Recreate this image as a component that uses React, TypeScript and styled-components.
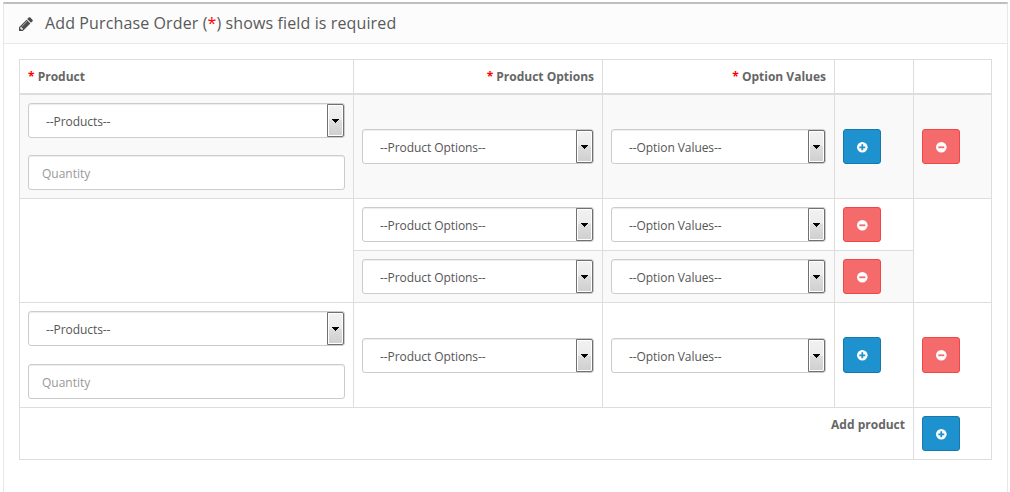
import React from "react";
import styled, { createGlobalStyle } from "styled-components";

const GlobalStyle = createGlobalStyle`
  * { box-sizing: border-box; }
  body {
    margin: 0;
    background: #fff;
    color: #666;
    font: 12px/20px "Open Sans", "Noto Sans", sans-serif;
    overflow: hidden;
  }
`;

const Panel = styled.section`
  width: 1005px;
  height: 490px;
  margin: 2px 0 0 3px;
  border: 1px solid #e8e8e8;
  border-top: 2px solid #bfbfbf;
  border-bottom: 0;
`;

const PanelHeading = styled.header`
  display: flex;
  align-items: center;
  height: 40px;
  padding-left: 15px;
  background: #fcfcfc;
  border-bottom: 1px solid #e8e8e8;
`;

const PanelTitle = styled.h3`
  margin: 0 0 2px 12px;
  color: #595959;
  font-size: 16px;
  font-weight: 400;
  line-height: 20px;
  letter-spacing: 0.12px;
  white-space: nowrap;
`;

const PanelBody = styled.div`
  padding: 15px;
`;

const Table = styled.div`
  display: grid;
  width: 973px;
  grid-template-columns: 333px 248px 231px 78px 77px;
  grid-template-rows: 34px 103px 51px 51px 104px 51px;
  gap: 1px;
  background: #ddd;
  border: 1px solid #ddd;
`;

const HeadCell = styled.div<{ $align?: string }>`
  padding: 7px 8px 0;
  background: #fff;
  border-bottom: 1px solid #ddd;
  font-weight: 700;
  text-align: ${(p) => p.$align ?? "right"};
  white-space: nowrap;
`;

const Cell = styled.div<{ $striped?: boolean; $rows?: number; $nudge?: boolean }>`
  display: flex;
  align-items: center;
  padding: ${(p) => (p.$nudge ? "1px" : "0")} 8px 0;
  background: ${(p) => (p.$striped ? "#f9f9f9" : "#fff")};
  grid-row: span ${(p) => p.$rows ?? 1};
`;

const ProductCell = styled(Cell)`
  flex-direction: column;
  justify-content: space-between;
  padding: 8px;
`;

const FooterCell = styled.div`
  grid-column: span 4;
  padding: 7px 8px;
  background: #fff;
  font-weight: 700;
  text-align: right;
`;

const Required = styled.span`
  color: #f00;
`;

const SelectBox = styled.div`
  display: flex;
  justify-content: space-between;
  width: 100%;
  height: 35px;
  padding-left: 17px;
  background: #fff;
  border: 1px solid #ccc;
  border-radius: 3px;
  box-shadow: inset 0 1px 1px rgba(0, 0, 0, 0.075);
  color: #555;
  line-height: 35px;
  letter-spacing: -0.07px;
`;

const SelectArrow = styled.span`
  display: flex;
  align-items: center;
  justify-content: center;
  width: 17px;
  height: 33px;
  border: 1px solid #707070;
  border-radius: 0 2px 2px 0;
  box-shadow: inset 0 0 0 1px #fff;
  background: linear-gradient(#f2f2f2, #ebebeb 50%, #dddddd 50%, #cfcfcf);
`;

const QuantityInput = styled.input`
  width: 100%;
  height: 35px;
  padding: 1px 13px 0;
  background: #fff;
  border: 1px solid #ccc;
  border-radius: 3px;
  box-shadow: inset 0 1px 1px rgba(0, 0, 0, 0.075);
  font: inherit;
  &::placeholder { color: #999; opacity: 1; }
`;

const IconButton = styled.button<{ $danger?: boolean; $tall?: boolean }>`
  display: flex;
  align-items: center;
  justify-content: center;
  width: 38px;
  height: ${(p) => (p.$tall ? 36 : 35)}px;
  padding: 0;
  border: 1px solid ${(p) => (p.$danger ? "#f24545" : "#1978ab")};
  border-radius: 3px;
  background: ${(p) => (p.$danger ? "#f56b6b" : "#1e91cf")};
`;

const Select = ({ label }: { label: string }) => (
  <SelectBox>
    {label}
    <SelectArrow>
      <svg width="7" height="4" viewBox="0 0 7 4" shapeRendering="crispEdges">
        <path d="M0 0h7v1H6v1H5v1H4v1H3V3H2V2H1V1H0z" />
      </svg>
    </SelectArrow>
  </SelectBox>
);

const CircleButton = ({ minus, tall }: { minus?: boolean; tall?: boolean }) => (
  <IconButton $danger={minus} $tall={tall} type="button" aria-label={minus ? "Remove" : "Add"}>
    <svg width="12" height="12" viewBox="0 0 12 12">
      <circle cx="6.3" cy="6.3" r="5.3" fill="#fff" />
      <path
        d={minus ? "M3.3 6.3h6" : "M3.3 6.3h6M6.3 3.3v6"}
        stroke={minus ? "#f56b6b" : "#1e91cf"}
        strokeWidth="1.8"
      />
    </svg>
  </IconButton>
);

const Pencil = () => (
  <svg width="14" height="14" viewBox="0 0 1536 1536">
    <path
      fill="#4d4d4d"
      d="M363 1408l91-91-235-235-91 91v107h128v128h107zM886 480q0-22-22-22-10 0-17 7l-542 542q-7 7-7 17 0 22 22 22 10 0 17-7l542-542q7-7 7-17zM832 288l416 416-832 832H0v-416zM1515 384q0 53-37 90l-166 166-416-416 166-165q36-38 90-38 53 0 91 38l235 234q37 39 37 91z"
    />
  </svg>
);

const ProductRow = ({ striped, tall }: { striped?: boolean; tall?: boolean }) => (
  <>
    <ProductCell $striped={striped}>
      <Select label="--Products--" />
      <QuantityInput placeholder="Quantity" />
    </ProductCell>
    <Cell $striped={striped} $nudge={tall}><Select label="--Product Options--" /></Cell>
    <Cell $striped={striped} $nudge={tall}><Select label="--Option Values--" /></Cell>
    <Cell $striped={striped}><CircleButton tall={tall} /></Cell>
    <Cell $striped={striped}><CircleButton minus tall={tall} /></Cell>
  </>
);

export default function App() {
  return (
    <>
      <GlobalStyle />
      <Panel>
        <PanelHeading>
          <Pencil />
          <PanelTitle>
            Add Purchase Order (<Required>*</Required>) shows field is required
          </PanelTitle>
        </PanelHeading>
        <PanelBody>
          <Table>
            <HeadCell $align="left"><Required>*</Required> Product</HeadCell>
            <HeadCell><Required>*</Required> Product Options</HeadCell>
            <HeadCell><Required>*</Required> Option Values</HeadCell>
            <HeadCell />
            <HeadCell />
            <ProductRow striped />
            <Cell $rows={2} />
            <Cell><Select label="--Product Options--" /></Cell>
            <Cell><Select label="--Option Values--" /></Cell>
            <Cell><CircleButton minus /></Cell>
            <Cell $rows={2} />
            <Cell $striped><Select label="--Product Options--" /></Cell>
            <Cell $striped><Select label="--Option Values--" /></Cell>
            <Cell $striped><CircleButton minus /></Cell>
            <ProductRow tall />
            <FooterCell>Add product</FooterCell>
            <Cell><CircleButton /></Cell>
          </Table>
        </PanelBody>
      </Panel>
    </>
  );
}
